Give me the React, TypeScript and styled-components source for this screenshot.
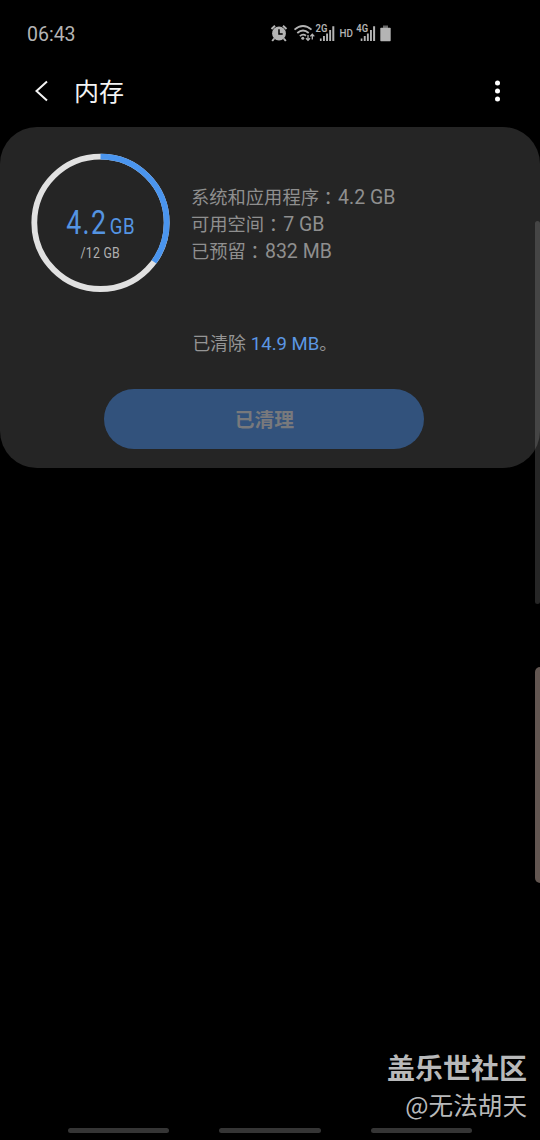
import React from 'react';
import styled, { createGlobalStyle } from 'styled-components';

const GlobalStyle = createGlobalStyle`
  html, body { margin: 0; padding: 0; background: #000; }
  * { box-sizing: border-box; }
`;

const Screen = styled.main`
  position: relative;
  width: 540px;
  height: 1140px;
  overflow: hidden;
  background: #000;
  display: flex;
  flex-direction: column;
  font-family: Roboto, 'Noto Sans CJK SC', sans-serif;
`;

const StatusBar = styled.header`
  height: 60px;
  padding: 10px 0 0 27px;
  display: flex;
  align-items: center;
  color: #b4b4b4;
`;

const Clock = styled.time`
  width: 241px;
  font-size: 19.5px;
  line-height: 24px;
`;

const StatusIcons = styled.svg`
  display: block;
  margin-top: -4px;
`;

const TitleBar = styled.div`
  height: 67px;
  padding: 0 32px 4px 34px;
  display: flex;
  align-items: center;
`;

const Title = styled.h1`
  flex: 1;
  margin: 0 0 0 25px;
  padding-top: 2px;
  font-size: 25px;
  line-height: 36px;
  font-weight: 400;
  color: #f4f4f4;
`;

const IconButton = styled.button`
  display: flex;
  padding: 0 0 1px;
  border: 0;
  background: none;
`;

const Card = styled.section`
  height: 341px;
  margin-top: 0.4px;
  border-radius: 37px;
  background: #252525;
  display: flex;
  flex-direction: column;
`;

const Summary = styled.div`
  display: flex;
  height: 166px;
  padding: 26px 0 0 30px;
`;

const Details = styled.div`
  margin: 31px 0 0 21px;
  color: #8f8f8f;
`;

const DetailRow = styled.div`
  height: 26.6px;
  line-height: 27px;
  font-size: 18.3px;
  white-space: nowrap;
`;

const Colon = styled.span`
  margin-right: 0.8px;
  line-height: 1;
  vertical-align: -1px;
  font-family: 'Noto Sans CJK TC', sans-serif;
`;

const Value = styled.span`
  font-size: 19.5px;
`;

const Cleared = styled.p`
  margin: 37px 0 0 192.5px;
  height: 28px;
  line-height: 28px;
  font-size: 17.8px;
  color: #959595;
  white-space: nowrap;
`;

const Amount = styled.span`
  margin-left: 0.6px;
  font-size: 18.5px;
  color: #5b97e4;
`;

const CleanButton = styled.button`
  width: 320px;
  height: 60px;
  margin: 31px 0 0 104.4px;
  padding: 0 0 1px;
  border: 0;
  border-radius: 30px;
  background: #32527c;
  color: #78797c;
  font: 700 19.8px 'Noto Sans CJK SC', sans-serif;
`;

const Watermark = styled.footer`
  margin-top: auto;
  padding-right: 13px;
  text-align: right;
  color: #b8b9ba;
  font-family: 'Noto Sans CJK SC', sans-serif;
`;

const Community = styled.div`
  font-size: 28px;
  line-height: 38px;
  font-weight: 700;
`;

const Author = styled.div`
  font-size: 24.6px;
  line-height: 36px;
`;

const NavHints = styled.nav`
  display: flex;
  gap: 50px;
  padding: 6px 0 7px 68px;
`;

const NavHint = styled.span`
  width: 101.3px;
  height: 5px;
  border-radius: 3px;
  background: #353535;
`;

const ScrollThumb = styled.div`
  position: absolute;
  top: 221px;
  right: 0;
  width: 5px;
  height: 383px;
  border-radius: 3px;
  background: rgba(255, 255, 255, 0.15);
`;

const EdgeHandle = styled.div`
  position: absolute;
  top: 667px;
  right: 0;
  width: 5.5px;
  height: 216px;
  border-radius: 6px 0 0 6px;
  background: #625651;
`;

const details = [
  ['系统和应用程序', '4.2 GB'],
  ['可用空间', '7 GB'],
  ['已预留', '832 MB'],
];

function Signal({ x, label }: { x: number; label: string }) {
  return (
    <g transform={`translate(${x} 0)`}>
      <text x="0" y="12.3" fontSize="10.3" fontWeight="600" textLength="11.8" lengthAdjust="spacingAndGlyphs">{label}</text>
      <path d="M4.4 18.5h1.7V21H4.4zM7.5 16h1.9v5H7.5zM10.6 13.5h1.9V21h-1.9zM13.7 10h1.9v11h-1.9zM16.8 6.3h2V21h-2z" />
    </g>
  );
}

function StatusGlyphs() {
  return (
    <StatusIcons width="130" height="26" viewBox="0 0 130 26" fill="#b4b4b4" fontFamily="Roboto, sans-serif">
      <circle cx="11" cy="13.5" r="6.9" />
      <path d="M3.5 9 7 5.8M18.5 9 15 5.8M6.2 18.5 4.2 21M15.8 18.5l2 2.5" fill="none" stroke="#b4b4b4" strokeWidth="2" />
      <path d="M11 9.3V14h3.7" fill="none" stroke="#000" strokeWidth="1.5" />
      <g fill="none" stroke="#b4b4b4" strokeWidth="1.8">
        <path d="M26.5 9.6Q35 2.4 43.5 9.6M29.3 13Q35 8 40.7 13M31.9 16.2Q35 13.2 38 15.8" />
        <path d="M40 15v5.3M38 18.3l2 2.1 2-2.1M44.3 19.4v-5M42.3 16.4l2-2.1 2 2.1" strokeWidth="1.3" />
      </g>
      <circle cx="34.8" cy="18.2" r="1.5" />
      <Signal x={47.5} label="2G" />
      <text x="71.5" y="16.6" fontSize="10.2" fontWeight="500" textLength="13.4" lengthAdjust="spacingAndGlyphs">HD</text>
      <Signal x={88.3} label="4G" />
      <path d="M115 5.5h5V8h-5z" fill="#686868" />
      <path d="M113 7.7h9q.7 0 .7.7v12q0 .8-.7.8h-9q-.7 0-.7-.8v-12q0-.7.7-.7z" />
    </StatusIcons>
  );
}

function MemoryRing() {
  const circumference = 2 * Math.PI * 66.2;
  return (
    <svg width="140" height="140" viewBox="0 0 140 140" fontFamily="Roboto, sans-serif">
      <g fill="none" strokeWidth="5.8" transform="rotate(-90 70.5 69.8)">
        <circle cx="70.5" cy="69.8" r="66.2" stroke="#e1e1e1" />
        <circle cx="70.5" cy="69.8" r="66.2" stroke="#4a95ef" strokeDasharray={`${circumference * 0.35} ${circumference}`} />
      </g>
      <g fill="#5494e2">
        <text x="36.3" y="80.5" fontSize="32.8" letterSpacing="1.6" textLength="41" lengthAdjust="spacingAndGlyphs">4.2</text>
        <text x="79.7" y="80.5" fontSize="22.5" letterSpacing="0.6" textLength="25.3" lengthAdjust="spacingAndGlyphs">GB</text>
      </g>
      <text x="50.5" y="105" fontSize="14.7" fill="#b0b0b0" letterSpacing="0.3" textLength="39.5" lengthAdjust="spacingAndGlyphs">/12 GB</text>
    </svg>
  );
}

export default function App() {
  return (
    <Screen>
      <GlobalStyle />
      <StatusBar>
        <Clock>06:43</Clock>
        <StatusGlyphs />
      </StatusBar>
      <TitleBar>
        <IconButton aria-label="返回">
          <svg width="15" height="24" viewBox="0 0 15 24" fill="none" stroke="#f4f4f4" strokeWidth="2">
            <path d="M13 2.5 2.5 12 13 21.5" />
          </svg>
        </IconButton>
        <Title>内存</Title>
        <IconButton aria-label="更多">
          <svg width="21" height="24" viewBox="0 0 21 24" fill="#fff">
            <circle cx="10.5" cy="4" r="2.5" />
            <circle cx="10.5" cy="12" r="2.5" />
            <circle cx="10.5" cy="20" r="2.5" />
          </svg>
        </IconButton>
      </TitleBar>
      <Card>
        <Summary>
          <MemoryRing />
          <Details>
            {details.map(([label, value]) => (
              <DetailRow key={label}>{label}<Colon>：</Colon><Value>{value}</Value></DetailRow>
            ))}
          </Details>
        </Summary>
        <Cleared>已清除 <Amount>14.9 MB</Amount>。</Cleared>
        <CleanButton>已清理</CleanButton>
      </Card>
      <Watermark>
        <Community>盖乐世社区</Community>
        <Author>@无法胡天</Author>
      </Watermark>
      <NavHints>
        <NavHint />
        <NavHint />
        <NavHint />
      </NavHints>
      <ScrollThumb />
      <EdgeHandle />
    </Screen>
  );
}
